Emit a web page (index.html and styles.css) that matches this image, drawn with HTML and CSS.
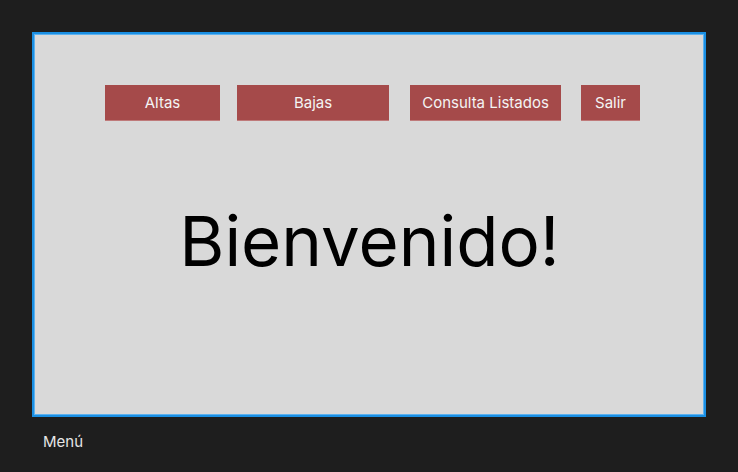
FILE: index.html
```html
<!DOCTYPE html>
<html lang="es">
<head>
<meta charset="utf-8">
<title>Menú</title>
<link rel="stylesheet" href="styles.css">
</head>
<body>
<div class="frame">
  <nav class="menu">
    <button class="btn btn-altas">Altas</button>
    <button class="btn btn-bajas">Bajas</button>
    <button class="btn btn-consulta">Consulta Listados</button>
    <button class="btn btn-salir">Salir</button>
  </nav>
  <h1 class="welcome">Bienvenido!</h1>
</div>
<div class="label">Menú</div>
</body>
</html>
```
FILE: styles.css
```css
html, body {
  margin: 0;
  padding: 0;
  background: #1e1e1e;
  font-family: Inter, "Noto Sans", sans-serif;
}
body {
  padding: 32px 0 0 32px;
  height: 472px;
  box-sizing: border-box;
}
.frame {
  width: 674px;
  height: 385px;
  box-sizing: border-box;
  border: 2px solid #1a8fe3;
  box-shadow: inset 0 0 0 1px #5fb2ee;
  background: #d9d9d9;
  display: flex;
  flex-direction: column;
}
.menu {
  display: flex;
  padding: 51px 0 0 71px;
}
.btn {
  height: 36px;
  border: 0;
  margin: 0;
  padding: 0;
  background: #a54a4a;
  box-shadow: 0 -1px 0 #bf7a7a inset;
  color: #f4f4f4;
  font-family: Inter, "Noto Sans", sans-serif;
  font-size: 15px;
  line-height: 36px;
  text-align: center;
}
.btn-altas { width: 115px; }
.btn-bajas { width: 152px; margin-left: 17px; }
.btn-consulta { width: 151px; margin-left: 21px; }
.btn-salir { width: 59px; margin-left: 20px; }
.welcome {
  margin: 86px 0 0 1px;
  font-weight: 400;
  font-size: 69px;
  line-height: 1;
  color: #000000;
  text-align: center;
}
.label {
  margin: 17px 0 0 11px;
  font-size: 15px;
  line-height: 1;
  color: #e6e6e6;
}
```
